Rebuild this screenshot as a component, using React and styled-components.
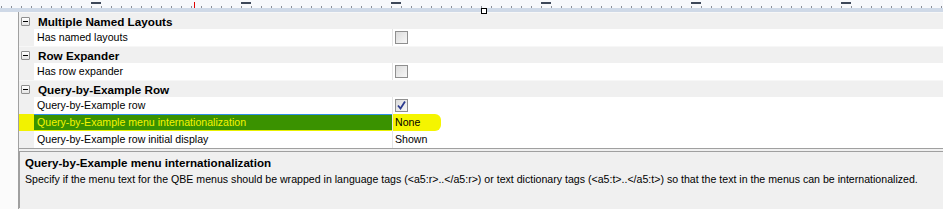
import React from "react";
import styled, { createGlobalStyle } from "styled-components";

const GlobalStyle = createGlobalStyle`
  html, body {
    margin: 0;
    padding: 0;
    background: #f0f0f0;
    font-family: "Liberation Sans", Arial, sans-serif;
    font-size: 10.6px;
    color: #000;
    overflow: hidden;
  }
`;

const Page = styled.div`
  width: 943px;
  height: 209px;
  display: flex;
  flex-direction: column;
  overflow: hidden;
`;

const RulerBar = styled.div`
  height: 8px;
  background: #f7f8fb;
  overflow: hidden;
`;

const Band = styled.div`
  position: relative;
  height: 4px;
  background: #cfd9e7;
`;

const Handle = styled.span`
  position: absolute;
  left: 481px;
  top: 0;
  width: 4px;
  height: 4px;
  border: 1px solid #000;
  background: #fff;
`;

const Body = styled.div`
  flex: 1;
  display: flex;
`;

const LeftStrip = styled.div`
  flex: 0 0 18px;
  background: #fbfbfb;
  border-right: 1px solid #a0a0a0;
`;

const Main = styled.div`
  flex: 1;
  min-width: 0;
  display: flex;
  flex-direction: column;
`;

const Grid = styled.div`
  display: flex;
  flex-direction: column;
  border-bottom: 1px solid #a0a0a0;
`;

const Row = styled.div`
  height: 17px;
  display: grid;
  grid-template-columns: 15px 358px 1fr;
  align-items: stretch;
  line-height: 17px;
  box-sizing: border-box;
`;

const CategoryRow = styled(Row)`
  background: #f0f0f0;
  border-top: 1px solid #f7f7f7;
`;

const Gutter = styled.div`
  background: ${(p) => (p.$marked ? "#f2f200" : "#f0f0f0")};
  display: flex;
  align-items: center;
  justify-content: center;
`;

const MinusBox = styled.span`
  width: 7px;
  height: 7px;
  border: 1px solid #8e8e8e;
  background: linear-gradient(#ffffff, #e4e4e4);
  border-radius: 1px;
  position: relative;
  margin-left: -2px;
  &::after {
    content: "";
    position: absolute;
    left: 1px;
    top: 3px;
    width: 5px;
    height: 1px;
    background: #000;
  }
`;

const CategoryTitle = styled.div`
  grid-column: 2 / 4;
  font-weight: bold;
  font-size: 11.7px;
  padding-left: 4px;
  white-space: nowrap;
`;

const NameCell = styled.div`
  background: ${(p) => (p.$selected ? "#3a9200" : "#ffffff")};
  color: ${(p) => (p.$selected ? "#f4f400" : "#000")};
  padding-left: 3px;
  white-space: nowrap;
  border-top: 1px solid ${(p) => (p.$selected ? "#2f8fe8" : "#ffffff")};
  box-sizing: border-box;
  line-height: 15px;
  box-shadow: ${(p) => (p.$selected ? "inset 0 -1px 0 #e9f000" : "none")};
`;

const ValueCell = styled.div`
  background: #ffffff;
  border-left: 1px solid #e4e4e4;
  padding-left: 2px;
  display: flex;
  align-items: center;
  white-space: nowrap;
`;

const Marker = styled.span`
  background: #f5f500;
  width: 46px;
  margin-left: -2px;
  padding-left: 2px;
  line-height: 17px;
  border-radius: 0 6px 6px 0;
`;

const Check = styled.span`
  width: 11px;
  height: 11px;
  border: 1px solid #8f8f8f;
  background: linear-gradient(135deg, #dcdcdc, #f7f7f7);
  display: flex;
  align-items: center;
  justify-content: center;
`;

const Description = styled.div`
  margin-top: 2px;
  height: 50px;
  border-top: 1px solid #a0a0a0;
  border-left: 1px solid #a0a0a0;
  background: #f0f0f0;
  padding: 3px 5px;
`;

const DescTitle = styled.div`
  font-weight: bold;
  font-size: 11.6px;
  line-height: 15px;
`;

const DescText = styled.div`
  line-height: 15px;
  margin-top: 2px;
  white-space: nowrap;
`;

function Ruler() {
  const ticks = [];
  for (let x = 1; x < 943; x += 10) {
    const major = (x - 95) % 100 === 0;
    ticks.push(
      <line key={x} x1={x + 0.5} x2={x + 0.5} y1={major ? 0 : 4} y2={8} stroke="#8a8f99" strokeWidth="1" />
    );
  }
  for (let x = 5; x < 943; x += 10) {
    ticks.push(<line key={"h" + x} x1={x + 0.5} x2={x + 0.5} y1={6} y2={8} stroke="#a8adb6" strokeWidth="1" />);
  }
  const labels = [];
  for (let x = 95; x < 943; x += 150) {
    labels.push(<rect key={"l" + x} x={x - 4} y={0} width={10} height={2} fill="#3c4658" />);
  }
  return (
    <RulerBar>
      <svg width="943" height="8">
        {ticks}
        {labels}
        <line x1="194.5" x2="194.5" y1="0" y2="8" stroke="#e00000" strokeWidth="1" />
      </svg>
    </RulerBar>
  );
}

function CheckBox({ checked }) {
  return (
    <Check>
      {checked && (
        <svg width="9" height="9" viewBox="0 0 9 9">
          <path d="M1 4.5 L3.5 7.5 L8 0.5" fill="none" stroke="#2b3a8f" strokeWidth="1.8" />
        </svg>
      )}
    </Check>
  );
}

function Category({ title }) {
  return (
    <CategoryRow>
      <Gutter>
        <MinusBox />
      </Gutter>
      <CategoryTitle>{title}</CategoryTitle>
    </CategoryRow>
  );
}

function Property({ name, value, selected }) {
  return (
    <Row>
      <Gutter $marked={selected} />
      <NameCell $selected={selected}>{name}</NameCell>
      <ValueCell>
        {typeof value === "boolean" ? (
          <CheckBox checked={value} />
        ) : selected ? (
          <Marker>{value}</Marker>
        ) : (
          value
        )}
      </ValueCell>
    </Row>
  );
}

export default function App() {
  return (
    <Page>
      <GlobalStyle />
      <Ruler />
      <Band>
        <Handle />
      </Band>
      <Body>
        <LeftStrip />
        <Main>
          <Grid>
            <Category title="Multiple Named Layouts" />
            <Property name="Has named layouts" value={false} />
            <Category title="Row Expander" />
            <Property name="Has row expander" value={false} />
            <Category title="Query-by-Example Row" />
            <Property name="Query-by-Example row" value={true} />
            <Property name="Query-by-Example menu internationalization" value="None" selected />
            <Property name="Query-by-Example row initial display" value="Shown" />
          </Grid>
          <Description>
            <DescTitle>Query-by-Example menu internationalization</DescTitle>
            <DescText>
              Specify if the menu text for the QBE menus should be wrapped in language tags (&lt;a5:r&gt;..&lt;/a5:r&gt;) or text dictionary tags (&lt;a5:t&gt;..&lt;/a5:t&gt;) so that the text in the menus can be internationalized.
            </DescText>
          </Description>
        </Main>
      </Body>
    </Page>
  );
}
